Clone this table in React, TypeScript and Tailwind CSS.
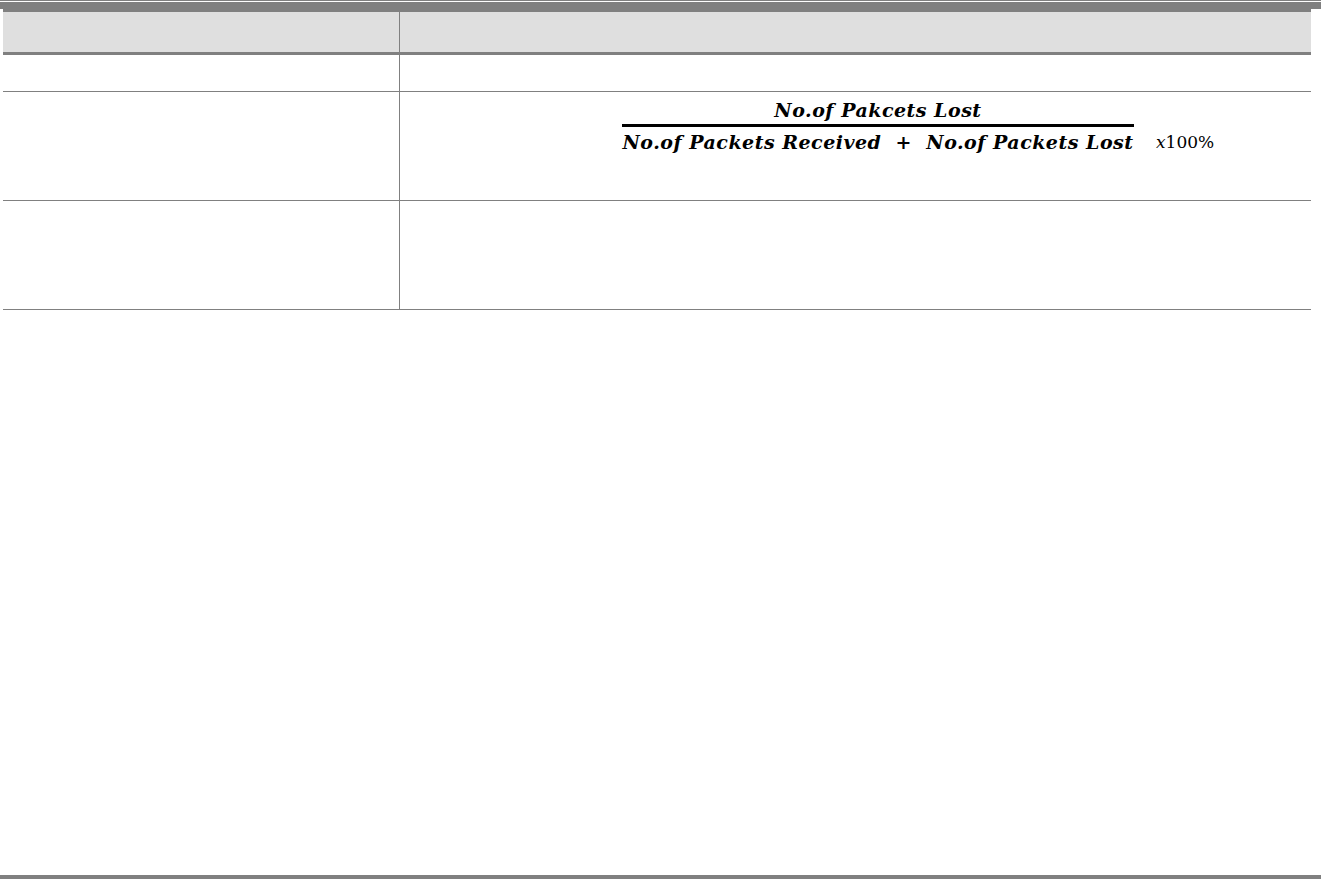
export default function App() {
  return (
    <div className="h-[879px] flex flex-col bg-white">
      {/* top rule */}
      <div className="h-px bg-[#808080]" />
      <div className="h-px" />
      <div className="h-[7px] bg-[#808080]" />

      <div className="ml-[3px] w-[1308px]">
        {/* header row */}
        <div className="flex h-[46px] border-t-[3px] border-b-[3px] border-[#808080] bg-[#dfdfdf]">
          <div className="w-[397px] border-r border-[#808080]" />
          <div className="flex-1" />
        </div>

        <div className="flex h-[37px] border-b border-[#808080]">
          <div className="w-[397px] border-r border-[#808080]" />
          <div className="flex-1" />
        </div>

        <div className="flex h-[109px] border-b border-[#808080]">
          <div className="w-[397px] border-r border-[#808080]" />
          <div className="flex-1 pl-[222px] pt-[6px]">
            <div className="flex items-end font-['DejaVu_Serif',serif] italic font-bold text-black">
              <div className="flex w-[512px] flex-col items-center">
                <div className="text-[19px] leading-[24px] tracking-[0.5px]">No.of Pakcets Lost</div>
                <div className="h-[3px] w-[512px] bg-black mt-[2px]" />
                <div className="mt-[3px] text-[19px] leading-[24px] tracking-[0.5px] whitespace-pre">No.of Packets Received  +  No.of Packets Lost</div>
              </div>
              <div className="ml-[22px] mb-[2px] text-[17px] leading-[20px] font-normal">
                x<span className="not-italic">100%</span>
              </div>
            </div>
          </div>
        </div>

        <div className="flex h-[109px] border-b border-[#808080]">
          <div className="w-[397px] border-r border-[#808080]" />
          <div className="flex-1" />
        </div>
      </div>

      <div className="flex-1" />
      <div className="h-[4px] bg-[#808080]" />
    </div>
  );
}
